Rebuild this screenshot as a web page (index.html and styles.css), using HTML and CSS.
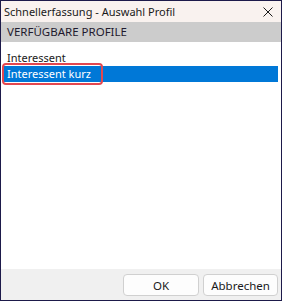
FILE: index.html
```html
<!DOCTYPE html>
<html lang="de">
<head>
  <meta charset="UTF-8">
  <title>Schnellerfassung - Auswahl Profil</title>
  <link rel="stylesheet" href="styles.css">
</head>
<body>
  <div class="window">
    <div class="titlebar">
      <span class="title">Schnellerfassung - Auswahl Profil</span>
      <span class="close">
        <svg width="10" height="10" viewBox="0 0 10 10"><path d="M0.5 0.5 L9.5 9.5 M9.5 0.5 L0.5 9.5" stroke="#1a1a1a" stroke-width="1"/></svg>
      </span>
    </div>
    <div class="header">VERFÜGBARE PROFILE</div>
    <div class="list">
      <div class="row">Interessent</div>
      <div class="row selected">Interessent kurz<span class="mark"></span></div>
    </div>
    <div class="footer">
      <button class="btn ok" type="button">OK</button>
      <button class="btn" type="button">Abbrechen</button>
    </div>
  </div>
</body>
</html>
```
FILE: styles.css
```css
body {
  margin: 0;
  padding: 0;
  font-family: 'Noto Sans', 'Open Sans', sans-serif;
  font-size: 11px;
  color: #1a1a1a;
}
.window {
  width: 282px;
  height: 301px;
  box-sizing: border-box;
  border: 1px solid #1d1a4a;
  display: flex;
  flex-direction: column;
  background-color: #fff;
}
.titlebar {
  height: 21px;
  background-color: #f9f2ef;
  display: flex;
  align-items: center;
  justify-content: space-between;
  padding: 0 8px 0 3px;
}
.close {
  display: flex;
  padding-top: 1px;
}
.header {
  height: 20px;
  line-height: 20px;
  background-color: #cccccc;
  padding-left: 6px;
  font-size: 11.5px;
  color: #1f1a2e;
}
.list {
  flex: 1;
  padding: 8px 3px 0 2px;
}
.row {
  height: 16px;
  line-height: 16px;
  padding-left: 4px;
  position: relative;
}
.row.selected {
  background-color: #0078d7;
  color: #fff;
}
.mark {
  position: absolute;
  left: -1px;
  top: -3px;
  width: 101px;
  height: 22px;
  box-sizing: border-box;
  border: 2px solid #e3474f;
  border-radius: 4px;
}
.footer {
  height: 31px;
  box-sizing: border-box;
  background-color: #f0f0f0;
  display: flex;
  justify-content: flex-end;
  gap: 4px;
  padding: 5px 3px 0 0;
}
.btn {
  height: 22px;
  width: 75px;
  font-family: inherit;
  font-size: 11.5px;
  color: #1a1a1a;
  background-color: #fdfdfd;
  border: 1px solid #d0d0d0;
  border-radius: 4px;
  padding: 0;
}
.btn.ok {
  width: 76px;
}
```
